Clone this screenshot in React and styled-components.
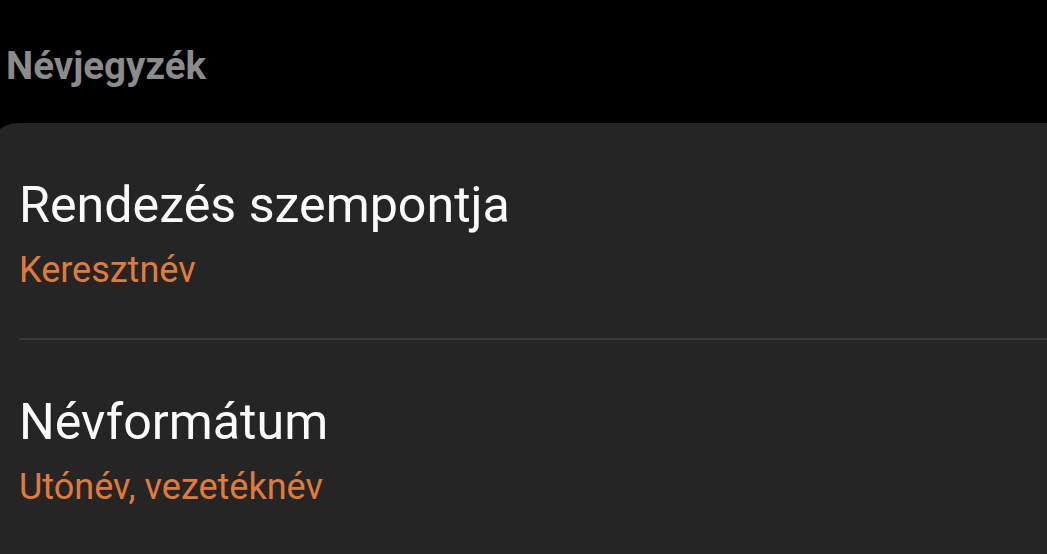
import React from 'react';
import styled, { createGlobalStyle } from 'styled-components';

const GlobalStyle = createGlobalStyle`
  html, body {
    margin: 0;
    padding: 0;
    background: #000;
  }
  body {
    font-family: Roboto, "Noto Sans", "Liberation Sans", sans-serif;
    overflow: hidden;
  }
`;

const Screen = styled.div`
  width: 1047px;
  height: 554px;
  background: #000;
  display: flex;
  flex-direction: column;
  overflow: hidden;
`;

const SectionHeader = styled.h2`
  margin: 0;
  padding: 44px 0 0 6px;
  height: 44px;
  font-size: 38.5px;
  line-height: 44px;
  font-weight: 700;
  color: #8b8b8b;
`;

const Card = styled.div`
  margin: 35px 0 0 -12px;
  padding-left: 12px;
  flex: 1;
  background: #252525;
  border-top-left-radius: 30px;
  display: flex;
  flex-direction: column;
`;

const Row = styled.div`
  margin-left: 19px;
  padding: 52px 0 47px;
  display: flex;
  flex-direction: column;
  gap: 14px;
  border-bottom: ${(p) => (p.$divider ? '2px solid #393939' : 'none')};
`;

const Title = styled.div`
  font-size: 50.2px;
  line-height: 60px;
  color: #fafafa;
`;

const Value = styled.div`
  font-size: 36px;
  line-height: 42px;
  color: #e27a3c;
`;

const settings = [
  { title: 'Rendezés szempontja', value: 'Keresztnév' },
  { title: 'Névformátum', value: 'Utónév, vezetéknév' },
];

export default function App() {
  return (
    <Screen>
      <GlobalStyle />
      <SectionHeader>Névjegyzék</SectionHeader>
      <Card>
        {settings.map((s, i) => (
          <Row key={s.title} $divider={i < settings.length - 1}>
            <Title>{s.title}</Title>
            <Value>{s.value}</Value>
          </Row>
        ))}
      </Card>
    </Screen>
  );
}
